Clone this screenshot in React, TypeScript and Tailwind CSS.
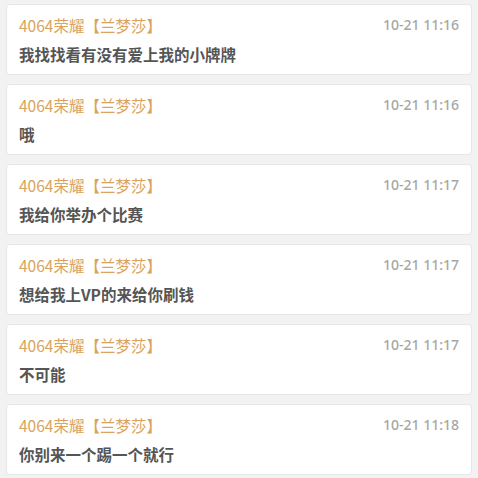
import React from "react";

const items = [
  { time: "10-21 11:16", msg: "我找找看有没有爱上我的小牌牌" },
  { time: "10-21 11:16", msg: "哦" },
  { time: "10-21 11:17", msg: "我给你举办个比赛" },
  { time: "10-21 11:17", msg: "想给我上VP的来给你刷钱" },
  { time: "10-21 11:17", msg: "不可能" },
  { time: "10-21 11:18", msg: "你别来一个踢一个就行" },
];

export default function App() {
  return (
    <div
      className="w-[478px] h-[478px] overflow-hidden bg-[#f2f2f2] px-[6px] pt-[4px] flex flex-col gap-[9px]"
      style={{ fontFamily: '"Noto Sans CJK SC", "Noto Sans", sans-serif' }}
    >
      {items.map((it, i) => (
        <div
          key={i}
          className="shrink-0 h-[71px] bg-white border border-[#e6e6e6] rounded-[4px] px-[12px] pt-[10px] flex flex-col"
        >
          <div className="flex items-center justify-between h-[20px]">
            <span className="text-[15.5px] leading-[20px] text-[#d9a35e]">4064荣耀【兰梦莎】</span>
            <span
              className="text-[14px] leading-[20px] font-medium text-[#a6a6a6]"
              style={{ fontFamily: '"Noto Sans", sans-serif' }}
            >
              {it.time}
            </span>
          </div>
          <div className="mt-[9px] text-[15.5px] leading-[20px] font-bold text-[#555555]">{it.msg}</div>
        </div>
      ))}
    </div>
  );
}
